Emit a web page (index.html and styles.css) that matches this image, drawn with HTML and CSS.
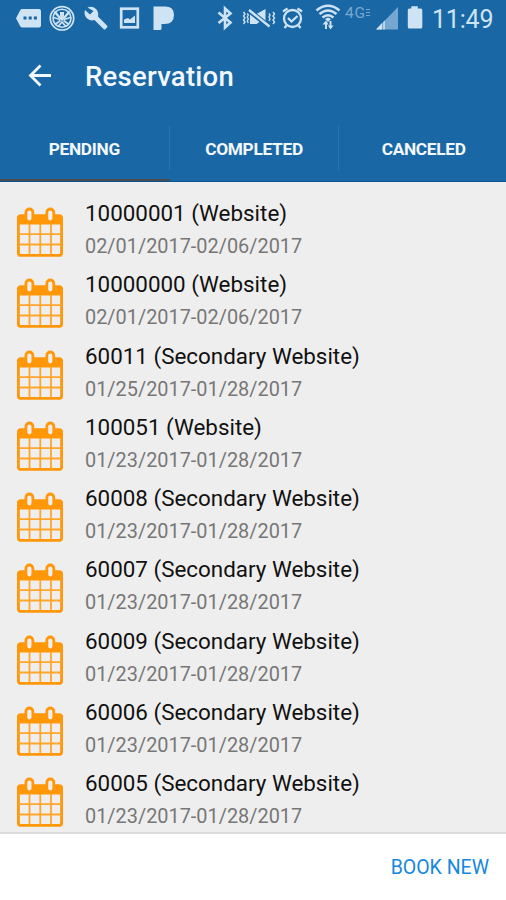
FILE: index.html
```html
<!DOCTYPE html>
<html lang="en">
<head>
<meta charset="utf-8">
<title>Reservation</title>
<link rel="stylesheet" href="styles.css">
</head>
<body>
<svg class="defs" width="0" height="0">
  <symbol id="calendar" viewBox="0 0 46 50">
    <rect x="1.4" y="8.6" width="43.2" height="39.8" rx="2.5" fill="none" stroke="#ff9708" stroke-width="2.9"/>
    <path d="M1 9h44v8.500H1z" fill="#ff9708"/>
    <path d="M12.500 17v31M23.300 17v31M34 17v31M1 27.200h44M1 37.500h44" stroke="#ffa52a" stroke-width="1.800"/>
    <rect x="8.900" y="2" width="7" height="12.800" rx="3.500" fill="#efeeee" stroke="#ff9708" stroke-width="2.800"/>
    <rect x="29.800" y="2" width="7" height="12.800" rx="3.500" fill="#efeeee" stroke="#ff9708" stroke-width="2.800"/>
  </symbol>
</svg>
<div class="screen">
  <header class="header">
    <div class="status">
      <svg width="45" height="38" viewBox="0 0 45 38"><path d="M22.500 9H39q2 0 2 2v14.500q0 2-2 2H22.500q-1.500 0-2.300-1.200L16 18.300l4.200-8q.8-1.300 2.300-1.300z" fill="#cee3f3"/><path d="M23.500 16.500h3v3h-3zM28.700 16.500h3v3h-3zM33.900 16.500h3v3h-3z" fill="#1a67a5"/></svg>
      <svg width="35" height="38" viewBox="45 0 35 38" fill="none" stroke="#cee3f3"><circle cx="62" cy="18.300" r="11.700" stroke-width="1.700"/><circle cx="62" cy="18.300" r="9" stroke-width="1.600"/><path d="M54.500 11.500l5 6 2.500 2 2.500-2 5-6" stroke-width="2.400"/><path d="M53.500 17.500l6.500 2M70.500 17.500l-6.500 2M60.500 20.500l-5.500 4M63.500 20.500l5.500 4M58.500 26l3.500-4 3.500 4" stroke-width="1.700"/><path d="M60 12h4v4l-2 4-2-4z" fill="#cee3f3" stroke="none"/></svg>
      <svg width="34" height="38" viewBox="80 0 34 38"><path d="M87.500 7.500q5-2 8.500 1.500 3 3 2 7.500l9 9q1 1 0 2l-1.500 1.500q-1 1-2 0l-9-9q-4.500 1.500-8-2-3-4-1.500-8l5 4.500 3.500-3.500z" fill="#cee3f3"/></svg>
      <svg width="32" height="38" viewBox="114 0 32 38"><rect x="121.200" y="8.700" width="16.600" height="18.600" fill="none" stroke="#cee3f3" stroke-width="2.700"/><path d="M124 23v-3.500l4-1.500 2 1.500 5-4V23z" fill="#cee3f3"/></svg>
      <svg width="34" height="38" viewBox="146 0 34 38"><path d="M153.500 6.500H165q9 0 9 8.300 0 9.200-9.500 9.200h-3v4.500q0 1.500-1.500 1.500h-6.500z" fill="#cee3f3"/></svg>
      <svg class="bt" width="27" height="38" viewBox="210 0 27 38" fill="none" stroke="#cee3f3" stroke-width="2.600"><path d="M218.500 12.500l12 10-5.500 5V8.500l5.500 5-12 9.500"/></svg>
      <svg width="41" height="38" viewBox="237 0 41 38" fill="none" stroke="#cee3f3"><path d="M250 14.500L259.500 22l-3 2h-6.500zM256.500 14l9-5v14.500z" fill="#cee3f3" stroke="none"/><path d="M249 10l20.500 16.500" stroke="#1a67a5" stroke-width="4.500"/><path d="M249 10l20.500 16.500" stroke-width="2.400"/><path d="M250 15.500L258 22l-2 2h-6z" fill="#cee3f3" stroke="none"/><path d="M243.500 12l1.500 2-1.500 2 1.500 2-1.500 2 1.500 2-1.500 2M247.300 13.500l1 1.500-1 2 1 2-1 2 1 2M269 13.500l1 1.500-1 2 1 2-1 2M273 12l1.500 2-1.500 2 1.500 2-1.500 2 1.500 2-1.500 2" stroke-width="1.400"/></svg>
      <svg width="30" height="38" viewBox="278 0 30 38" fill="none" stroke="#cee3f3" stroke-width="2.300"><circle cx="292.500" cy="18.500" r="8.500"/><path d="M288 18l3.500 3.500 6-5.500M283 11.500l4.500-3M302 11.500l-4.500-3M286.500 25.500l-2 2.500M298.500 25.500l2 2.500"/></svg>
      <svg width="36" height="38" viewBox="308 0 36 38" fill="none" stroke="#cee3f3" stroke-width="2.400"><path d="M316.500 10.500q11.500-9.500 23 0M319.500 14q8.500-7 17 0M322.500 17.500q5.500-4.500 11 0"/><path d="M325 19l3-1.500 3 1.500-3 3z" fill="#cee3f3" stroke="none"/><path d="M326 22v7M330.500 21v7" stroke-width="1.900"/><path d="M322.500 24.500l3.500-4 2.500 4zM328 25.500h5.500l-3 4z" fill="#cee3f3" stroke="none"/></svg>
      <span class="net">4G<span class="lte"><i></i><i></i><i></i></span></span>
      <svg width="28" height="38" viewBox="374 0 28 38"><path d="M398 7v22.500h-22z" fill="#75a7d0"/><path d="M382 23v6.500h-6zM383.300 22l1.500-1.500v9h-1.500z" fill="#cee3f3"/></svg>
      <svg width="26" height="38" viewBox="402 0 26 38"><path d="M407.800 10q0-1.500 1.500-1.500h2V6.200h6.500v2.300h3q1.500 0 1.500 1.500v17q0 1.500-1.500 1.500h-11.500q-1.500 0-1.500-1.500z" fill="#cee3f3"/></svg>
      <span class="clock">11:49</span>
    </div>
    <div class="bar">
      <svg class="back" width="24" height="24" viewBox="0 0 24 24" fill="none" stroke="#f2f8fd" stroke-width="2.800"><path d="M24 11.500H3.500M13.500 1.500L3.500 11.500l10 10"/></svg>
      <h1>Reservation</h1>
    </div>
    <nav class="tabs">
      <div class="tab active"><span>PENDING</span></div>
      <div class="tab"><span>COMPLETED</span></div>
      <div class="tab"><span>CANCELED</span></div>
    </nav>
  </header>
  <main class="list">
    <div class="row"><svg><use href="#calendar"/></svg><div><h2>10000001 (Website)</h2><p>02/01/2017-02/06/2017</p></div></div>
    <div class="row"><svg><use href="#calendar"/></svg><div><h2>10000000 (Website)</h2><p>02/01/2017-02/06/2017</p></div></div>
    <div class="row"><svg><use href="#calendar"/></svg><div><h2>60011 (Secondary Website)</h2><p>01/25/2017-01/28/2017</p></div></div>
    <div class="row"><svg><use href="#calendar"/></svg><div><h2>100051 (Website)</h2><p>01/23/2017-01/28/2017</p></div></div>
    <div class="row"><svg><use href="#calendar"/></svg><div><h2>60008 (Secondary Website)</h2><p>01/23/2017-01/28/2017</p></div></div>
    <div class="row"><svg><use href="#calendar"/></svg><div><h2>60007 (Secondary Website)</h2><p>01/23/2017-01/28/2017</p></div></div>
    <div class="row"><svg><use href="#calendar"/></svg><div><h2>60009 (Secondary Website)</h2><p>01/23/2017-01/28/2017</p></div></div>
    <div class="row"><svg><use href="#calendar"/></svg><div><h2>60006 (Secondary Website)</h2><p>01/23/2017-01/28/2017</p></div></div>
    <div class="row"><svg><use href="#calendar"/></svg><div><h2>60005 (Secondary Website)</h2><p>01/23/2017-01/28/2017</p></div></div>
  </main>
  <footer class="footer"><span class="book">BOOK NEW</span></footer>
</div>
</body>
</html>
```
FILE: styles.css
```css
* { box-sizing: border-box; }
body { margin: 0; font-family: Roboto, "Liberation Sans", sans-serif; }
h1, h2, p { margin: 0; font-weight: 400; white-space: nowrap; }
.defs { display: block; }
.screen { width: 506px; height: 900px; display: flex; flex-direction: column; background: #efeeee; overflow: hidden; }
.header { height: 182px; background: #1a67a5; color: #f2f8fd; display: flex; flex-direction: column; flex: none; }
.status { height: 38px; display: flex; flex: none; }
.status svg { flex: none; }
.bt { margin-left: 30px; }
.net { width: 30px; height: 38px; padding: 6px 0 0 1px; display: flex; font-size: 15.500px; line-height: 15px; letter-spacing: 0.8px; color: #75a7d0; }
.lte { display: flex; flex-direction: column; gap: 2px; padding-top: 3px; }
.lte i { width: 4px; height: 1px; background: #75a7d0; }
.clock { margin-left: 4px; padding-top: 5px; font-size: 25px; line-height: 30px; letter-spacing: -0.2px; color: #cee3f3; white-space: nowrap; }
.bar { height: 76px; display: flex; align-items: center; padding-left: 27px; flex: none; }
.back { margin-right: 34px; }
h1 { font-size: 27.500px; font-weight: 500; line-height: 34px; padding-top: 2px; letter-spacing: 0.250px; }
.tabs { height: 67.500px; display: flex; border-bottom: 1px solid #0b5592; width: 509px; }
.tab { flex: 1; display: flex; padding-top: 12px; }
.tab span { flex: 1; height: 44px; line-height: 46px; text-align: center; font-size: 17.300px; letter-spacing: -0.3px; font-weight: 700; border-right: 1px solid #2c76b2; }
.tab:last-child span { border-right: 0; padding-right: 1px; }
.active { border-bottom: 2px solid #4b4b50; }
.list { height: 650px; padding-top: 14px; overflow: hidden; flex: none; }
.row { height: 71.250px; display: flex; padding: 11px 0 0 17px; }
.row svg { width: 46px; height: 50px; flex: none; margin-right: 22px; }
.row div { margin-top: -9px; }
h2 { font-size: 22.400px; line-height: 30px; color: #111; }
p { font-size: 19.900px; line-height: 26px; padding-top: 6px; color: #777; }
.footer { flex: 1; background: #fff; border-top: 2px solid #dcdcdc; display: flex; justify-content: flex-end; align-items: center; padding-right: 17px; }
.book { font-size: 19.500px; padding-top: 1px; color: #1787de; }
```
